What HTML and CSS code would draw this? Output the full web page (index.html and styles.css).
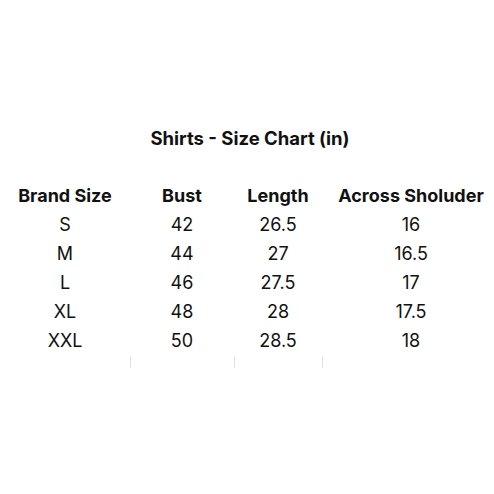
FILE: index.html
```html
<!DOCTYPE html>
<html>
<head>
<meta charset="utf-8">
<link rel="stylesheet" href="styles.css">
</head>
<body>
<div class="page">
  <h1 class="title">Shirts - Size Chart (in)</h1>
  <div class="chart">
    <div class="cell head">Brand Size</div>
    <div class="cell head">Bust</div>
    <div class="cell head">Length</div>
    <div class="cell head last">Across Sholuder</div>

    <div class="cell">S</div><div class="cell">42</div><div class="cell">26.5</div><div class="cell last">16</div>
    <div class="cell">M</div><div class="cell">44</div><div class="cell">27</div><div class="cell last">16.5</div>
    <div class="cell">L</div><div class="cell">46</div><div class="cell">27.5</div><div class="cell last">17</div>
    <div class="cell">XL</div><div class="cell">48</div><div class="cell">28</div><div class="cell last">17.5</div>
    <div class="cell">XXL</div><div class="cell">50</div><div class="cell">28.5</div><div class="cell last">18</div>

    <div class="tick none"></div><div class="tick"></div><div class="tick"></div><div class="tick"></div>
  </div>
</div>
</body>
</html>
```

FILE: styles.css
```css
html, body {
  margin: 0;
  padding: 0;
  background: #ffffff;
}
body {
  font-family: Inter, "Open Sans", "Liberation Sans", sans-serif;
  color: #111111;
}
.page {
  width: 494px;
  height: 494px;
  padding-top: 123px;
  box-sizing: border-box;
}
.title {
  margin: 0;
  padding-left: 6px;
  font-size: 18.5px;
  font-weight: 700;
  line-height: 30px;
  text-align: center;
}
.chart {
  margin-top: 28px;
  display: grid;
  grid-template-columns: 130px 104px 88px 1fr;
  grid-auto-rows: 29px;
}
.cell {
  text-align: center;
  font-size: 18px;
  line-height: 29px;
}
.cell.last {
  padding-left: 6px;
}
.head {
  font-weight: 700;
}
.tick {
  height: 11px;
  margin-top: 2px;
  border-left: 1px solid #e2e2e2;
}
.tick.none {
  border-left: none;
}
```
